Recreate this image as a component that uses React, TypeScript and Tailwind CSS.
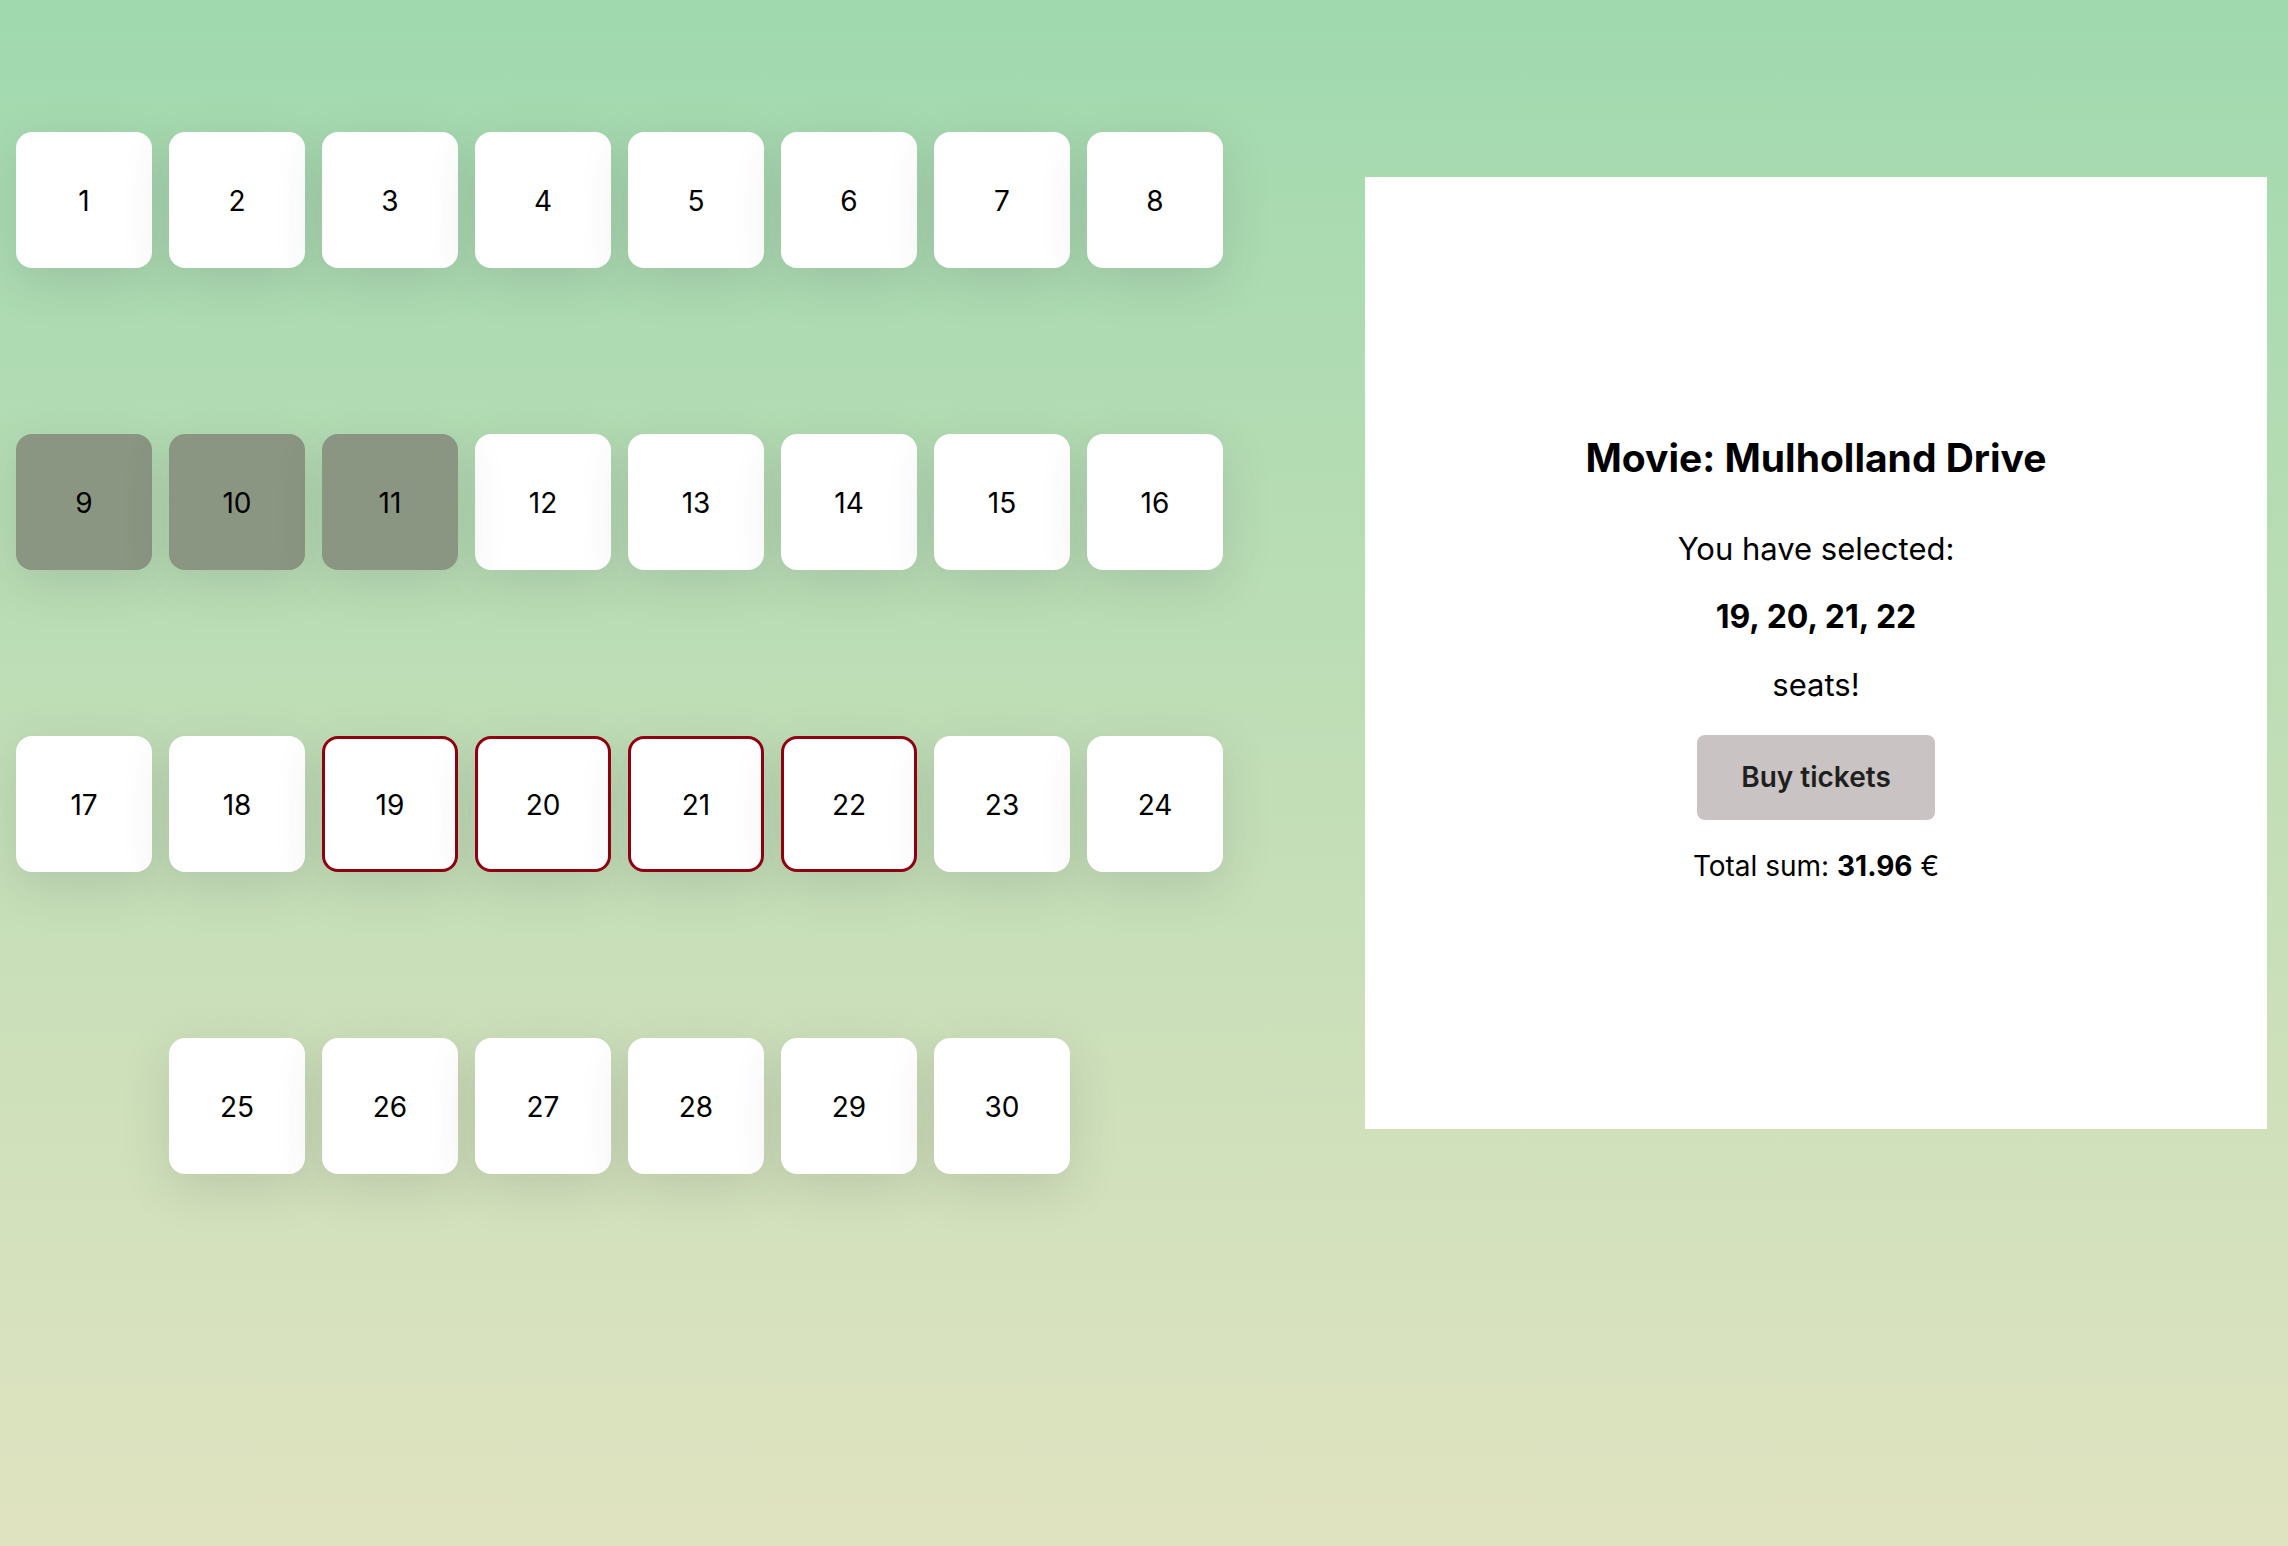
import { useState } from "react";

const ROWS: number[][] = [
  [1, 2, 3, 4, 5, 6, 7, 8],
  [9, 10, 11, 12, 13, 14, 15, 16],
  [17, 18, 19, 20, 21, 22, 23, 24],
  [25, 26, 27, 28, 29, 30],
];
const TAKEN = [9, 10, 11];
const PRICE = 7.99;

type SeatProps = {
  seat: number;
  taken: boolean;
  selected: boolean;
  onToggle: (seat: number) => void;
};

function Seat({ seat, taken, selected, onToggle }: SeatProps) {
  const look = taken
    ? "relative bg-[#8b9682]"
    : selected
      ? "cursor-pointer border-3 border-[#900010] bg-white"
      : "cursor-pointer bg-white";
  return (
    <button
      type="button"
      disabled={taken}
      aria-pressed={selected}
      aria-label={`Seat ${seat}`}
      onClick={() => onToggle(seat)}
      className={`flex size-[136px] shrink-0 items-center justify-center rounded-2xl pt-0.5 text-[28px] text-black shadow-[0_14px_48px_rgba(60,60,66,0.15)] ${look}`}
    >
      {seat}
    </button>
  );
}

export default function App() {
  const [selected, setSelected] = useState<number[]>([19, 20, 21, 22]);

  const toggle = (seat: number) =>
    setSelected((current) =>
      current.includes(seat)
        ? current.filter((s) => s !== seat)
        : [...current, seat].sort((a, b) => a - b),
    );

  return (
    <div className="flex min-h-screen items-start bg-linear-to-b from-[#a0d9ae] to-[#e0e3c0] font-['Inter',sans-serif] text-black">
      <main className="flex shrink-0 flex-col gap-[166px] pt-[132px] pl-4">
        {ROWS.map((row) => (
          <div key={row[0]} className="flex justify-center gap-[17px]">
            {row.map((seat) => (
              <Seat
                key={seat}
                seat={seat}
                taken={TAKEN.includes(seat)}
                selected={selected.includes(seat)}
                onToggle={toggle}
              />
            ))}
          </div>
        ))}
      </main>

      <aside className="mt-[177px] mr-[21px] ml-[142px] flex flex-1 flex-col items-center bg-white pt-[257px] pb-[245px] text-center">
        <h1 className="text-[39px] leading-[48px] font-bold">Movie: Mulholland Drive</h1>
        <div className="mt-[49px] flex flex-col gap-8 text-[31px] leading-9">
          <p>You have selected:</p>
          <p className="text-[32px] leading-9 font-bold">{selected.join(", ")}</p>
          <p>seats!</p>
        </div>
        <button
          type="button"
          className="mt-8 cursor-pointer rounded-lg bg-[#c9c3c3] px-11 py-6 text-[28px] leading-[37px] font-semibold text-[#1f1f1f]"
        >
          Buy tickets
        </button>
        <p className="mt-7 text-[28px] leading-9">
          Total sum: <strong className="font-bold">{(selected.length * PRICE).toFixed(2)}</strong> €
        </p>
      </aside>
    </div>
  );
}
